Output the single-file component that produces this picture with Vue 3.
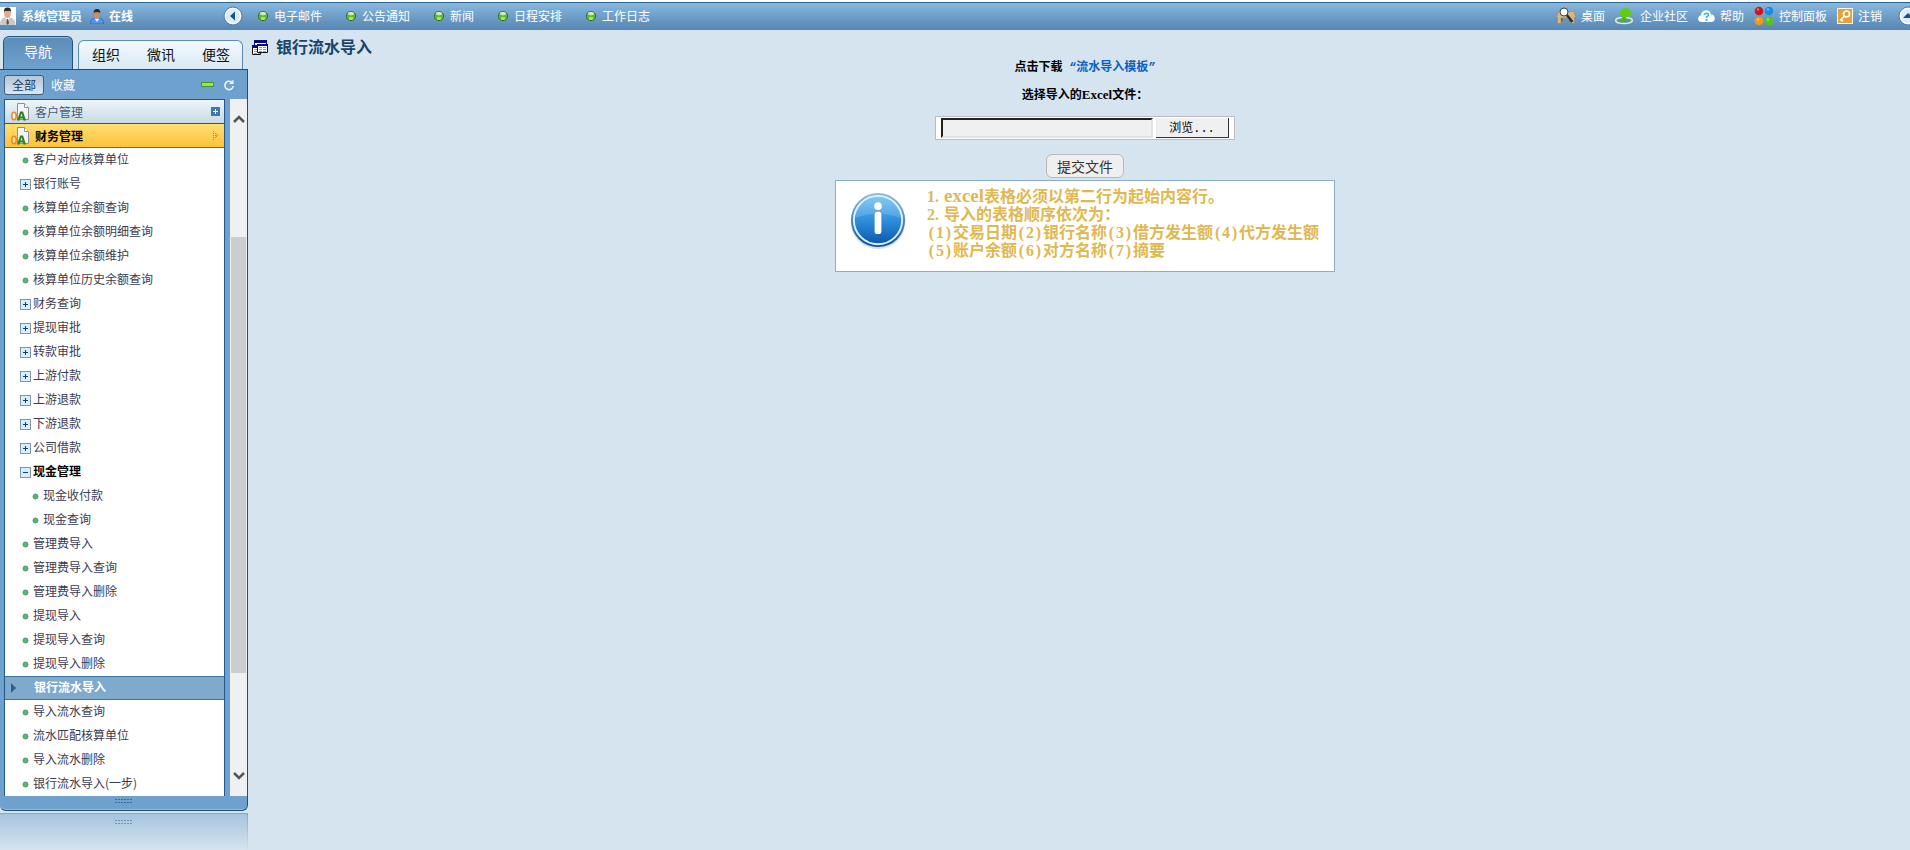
<script setup>
import { ref } from 'vue'

const shortcuts = ['电子邮件', '公告通知', '新闻', '日程安排', '工作日志']
const tabs = ['组织', '微讯', '便签']
const menu = [
  { t: '客户对应核算单位' },
  { t: '银行账号', k: 'plus' },
  { t: '核算单位余额查询' },
  { t: '核算单位余额明细查询' },
  { t: '核算单位余额维护' },
  { t: '核算单位历史余额查询' },
  { t: '财务查询', k: 'plus' },
  { t: '提现审批', k: 'plus' },
  { t: '转款审批', k: 'plus' },
  { t: '上游付款', k: 'plus' },
  { t: '上游退款', k: 'plus' },
  { t: '下游退款', k: 'plus' },
  { t: '公司借款', k: 'plus' },
  { t: '现金管理', k: 'minus' },
  { t: '现金收付款', nested: true },
  { t: '现金查询', nested: true },
  { t: '管理费导入' },
  { t: '管理费导入查询' },
  { t: '管理费导入删除' },
  { t: '提现导入' },
  { t: '提现导入查询' },
  { t: '提现导入删除' },
  { t: '银行流水导入', k: 'active' },
  { t: '导入流水查询' },
  { t: '流水匹配核算单位' },
  { t: '导入流水删除' },
  { t: '银行流水导入(一步)' }
]
const notes = [
  '1.excel表格必须以第二行为起始内容行。',
  '2.导入的表格顺序依次为：',
  '(1)交易日期(2)银行名称(3)借方发生额(4)代方发生额',
  '(5)账户余额(6)对方名称(7)摘要'
].map((line) => line.split(/([().]|excel)/).filter(Boolean))
const kindOf = (s) => (s === 'excel' ? 'word' : s === '.' ? 'half dot' : /^[()]$/.test(s) ? 'half' : '')
const fileName = ref('')
</script>

<template>
  <div class="page">
    <header class="topbar">
      <div class="user">
        <svg class="avatar" width="16" height="18" viewBox="0 0 16 18">
          <rect width="16" height="18" fill="#fff" />
          <path d="M0 18 Q0 11 5 10.500 L10 10.500 Q15.500 11 15.500 18Z" fill="#c9c9c9" />
          <path d="M5 10.500 L7.500 14 L10 10.500 L8.500 9.500H6.500Z" fill="#fff" />
          <path d="M7 12 L8 12 L9 16 L7.700 18 L6.400 16Z" fill="#555" />
          <ellipse cx="7.500" cy="6.500" rx="3.300" ry="4.500" fill="#e2ad83" />
          <path d="M4 6 Q3.300 0.500 7.500 0.600 Q11.700 0.500 11 6 L10.300 3.800 Q7.500 4 4.800 3.800Z" fill="#332821" />
        </svg>
        <strong>系统管理员</strong>
        <svg class="status" width="14" height="15" viewBox="0 0 14 15">
          <path d="M0.500 15 Q0 10 4 9.500 H10 Q14 10 13.500 15Z" fill="#5591ee" stroke="#2c61bd" stroke-width="0.700" />
          <path d="M4.500 9.500 L7 13 L9.500 9.500Z" fill="#eef5ff" />
          <ellipse cx="7" cy="5.500" rx="3" ry="4.200" fill="#c58f6a" />
          <path d="M3.800 5 Q3 0 7 0 Q11 0 10.200 5 L9.500 3.200 H4.500Z" fill="#2e2a2b" />
        </svg>
        <strong>在线</strong>
      </div>
      <button class="round" aria-label="收起左侧">
        <svg width="20" height="20" viewBox="0 0 20 20">
          <circle cx="10" cy="10" r="9" fill="#dcebf7" stroke="#4f7fa9" stroke-width="1" />
          <circle cx="10" cy="10" r="7.500" fill="none" stroke="#fff" />
          <path d="M12 5.500 V14.500 L7 10Z" fill="#1c5280" />
        </svg>
      </button>
      <nav class="shortcuts">
        <a v-for="s in shortcuts" :key="s" href="#">
          <svg width="10" height="12" viewBox="0 0 10 12">
            <circle cx="5" cy="6" r="4.600" fill="#5fbe25" stroke="#2c6b24" />
            <ellipse cx="5" cy="3.500" rx="3" ry="1.700" fill="#d3e9cc" />
            <ellipse cx="5" cy="8.500" rx="2.500" ry="1.500" fill="#a5ec58" />
          </svg>{{ s }}
        </a>
      </nav>
      <nav class="tools">
        <a href="#">
          <svg width="20" height="18" viewBox="0 0 20 18">
            <path d="M2 6 Q1 4.500 3 4.500 H17 Q19 4.500 18.500 6 L20 10.500 H18.500 V16.500 H15 V11 H5 V16.500 H1.500 V10.500 H0Z" fill="#d8b587" stroke="#a07f52" stroke-width="0.600" />
            <path d="M5 11 H7 V14.500 H5Z M13 11 H15 V14.500 H13Z" fill="#8a6a40" />
            <path d="M10 7 L16.500 15" stroke="#2e2e2e" stroke-width="2.400" />
            <circle cx="8" cy="5" r="4" fill="#f8fafc" stroke="#444" stroke-width="1" />
          </svg>桌面
        </a>
        <a href="#">
          <svg width="20" height="18" viewBox="0 0 20 18">
            <ellipse cx="9" cy="13.500" rx="8.300" ry="3" fill="#5f9a86" stroke="#d5ece2" stroke-width="1.500" />
            <path d="M7 8 H12 Q10 10.500 11.500 13 Q8.500 14.500 5.500 13 Q8 11 7 8Z" fill="#54b31c" />
            <ellipse cx="10.500" cy="5.800" rx="6" ry="4.500" fill="#62cc14" />
          </svg>企业社区
        </a>
        <a href="#">
          <svg width="17" height="16" viewBox="0 0 17 16">
            <path d="M4 14 Q0 14 0.200 10.500 Q0.500 7.500 3 7.300 Q3 2.500 8 2.200 Q12 2 13 6.500 Q16.500 6.500 16.800 10.300 Q16.700 14 13.500 14Z" fill="#fff" />
            <path d="M6.300 7 Q6.500 5.200 8.500 5.200 Q10.700 5.400 10.500 7 Q10.300 8.300 8.600 9 V10" fill="none" stroke="#23b8df" stroke-width="1.600" />
            <rect x="7.700" y="11" width="1.800" height="1.800" fill="#23b8df" />
          </svg>帮助
        </a>
        <a href="#">
          <svg width="20" height="20" viewBox="0 0 20 20">
            <circle cx="5" cy="5" r="4.300" fill="#d3131b" /><circle cx="15" cy="5" r="4.300" fill="#168ee5" />
            <circle cx="5" cy="15" r="4.300" fill="#f39a13" /><circle cx="15" cy="15" r="4.300" fill="#58c415" />
            <g fill="#fff" opacity="0.400"><circle cx="4" cy="3.500" r="1.200" /><circle cx="14" cy="3.500" r="1.200" /><circle cx="4" cy="13.500" r="1.200" /><circle cx="14" cy="13.500" r="1.200" /></g>
          </svg>控制面板
        </a>
        <a href="#">
          <svg width="16" height="16" viewBox="0 0 16 16">
            <rect x="0.500" y="0.500" width="15" height="15" fill="#e2a33a" stroke="#fdf6e4" />
            <circle cx="9.500" cy="6" r="3" fill="none" stroke="#fff" stroke-width="1.700" />
            <path d="M7.500 8 L3 12.500 M4 11.500 L5.800 13.300" stroke="#fff" stroke-width="1.700" />
          </svg>注销
        </a>
        <button class="round" aria-label="收起顶部">
          <svg width="12" height="20" viewBox="0 0 12 20">
            <circle cx="10" cy="10" r="9" fill="#dcebf7" stroke="#4f7fa9" stroke-width="1" />
            <circle cx="10" cy="10" r="7.500" fill="none" stroke="#fff" />
            <path d="M5 12 H15 L10 7Z" fill="#1c5280" />
          </svg>
        </button>
      </nav>
    </header>

    <div class="body">
      <aside class="side">
        <div class="tabs">
          <button class="tab-on">导航</button>
          <div class="tab-group"><button v-for="t in tabs" :key="t">{{ t }}</button></div>
        </div>
        <div class="panel">
          <div class="bar">
            <button class="all">全部</button>
            <button class="fav">收藏</button>
            <button class="collapse" aria-label="折叠"><i></i></button>
            <button class="reload" aria-label="刷新">
              <svg width="12" height="12" viewBox="0 0 12 12">
                <path d="M8.500 3 A4.200 4.200 0 1 0 10.200 7" fill="none" stroke="#eef6fd" stroke-width="1.600" />
                <path d="M6 5 H10.500 V0.500Z" fill="#eef6fd" />
              </svg>
            </button>
          </div>
          <div class="scroller">
            <div class="list">
              <a class="group" href="#">
                <svg class="oa" width="18" height="18" viewBox="0 0 18 18">
                  <path d="M6.500 0.500 H13.500 L17.500 4.500 V16.500 H6.500Z" fill="#f3f5f6" stroke="#8a9298" />
                  <path d="M13.500 0.500 V4.500 H17.500" fill="#fff" stroke="#8a9298" />
                  <ellipse cx="3" cy="13" rx="2.200" ry="3.800" fill="#fff" stroke="#ee8a18" stroke-width="1.600" />
                  <path d="M6 17.500 L9.200 8.500 H12 L15 17.500 H12.500 L12 15.500 H9 L8.500 17.500Z M9.500 13.500 H11.500 L10.600 10.500Z" fill="#2b8023" fill-rule="evenodd" />
                </svg>
                客户管理
                <svg class="end" width="9" height="9" viewBox="0 0 9 9"><rect width="9" height="9" fill="#3f78aa" /><path d="M4.500 2 V7 M2 4.500 H7" stroke="#fff" /></svg>
              </a>
              <a class="group open" href="#">
                <svg class="oa" width="18" height="18" viewBox="0 0 18 18">
                  <path d="M6.500 0.500 H13.500 L17.500 4.500 V16.500 H6.500Z" fill="#f3f5f6" stroke="#8a9298" />
                  <path d="M13.500 0.500 V4.500 H17.500" fill="#fff" stroke="#8a9298" />
                  <ellipse cx="3" cy="13" rx="2.200" ry="3.800" fill="#ffe9a8" stroke="#ee8a18" stroke-width="1.600" />
                  <path d="M6 17.500 L9.200 8.500 H12 L15 17.500 H12.500 L12 15.500 H9 L8.500 17.500Z M9.500 13.500 H11.500 L10.600 10.500Z" fill="#2b8023" fill-rule="evenodd" />
                </svg>
                财务管理
                <svg class="end" width="7" height="9" viewBox="0 0 7 9"><path d="M0 0h1v1h-1z M0 2h1v1h-1z M0 4h1v1h-1z M0 6h1v1h-1z M0 8h1v1h-1z M2 2h1v1h-1z M2 4h1v1h-1z M2 6h1v1h-1z M4 4h1v1h-1z M3 3h1v1h-1z M3 5h1v1h-1z" fill="#c38d14" /></svg>
              </a>
              <a v-for="m in menu" :key="m.t" href="#" class="row" :class="[m.k, { nested: m.nested }]">
                <svg v-if="m.k === 'active'" class="arrow" width="5" height="10" viewBox="0 0 5 10"><path d="M0 0 L5 5 L0 10Z" fill="#2c608d" /></svg>
                <svg v-else-if="m.k" class="mark" width="11" height="11" viewBox="0 0 11 11">
                  <rect x="0.500" y="0.500" width="10" height="10" fill="#d8effd" stroke="#8095aa" />
                  <path :d="m.k === 'plus' ? 'M3 5.500 H8 M5.500 3 V8' : 'M3 5.500 H8'" stroke="#123c86" />
                </svg>
                <svg v-else class="mark" width="11" height="11" viewBox="0 0 11 11">
                  <circle cx="5.500" cy="5.500" r="2.500" fill="#5cb95e" stroke="#4b967b" />
                </svg><span>{{ m.t }}</span>
              </a>
            </div>
            <div class="track">
              <svg width="12" height="10" viewBox="0 0 12 10"><path d="M1 8 L6 3 L11 8" fill="none" stroke="#555" stroke-width="2.500" /></svg>
              <div class="rail"><div class="thumb"></div></div>
              <svg width="12" height="10" viewBox="0 0 12 10"><path d="M1 2 L6 7 L11 2" fill="none" stroke="#555" stroke-width="2.500" /></svg>
            </div>
          </div>
          <div class="foot"><i class="grip"></i></div>
        </div>
        <div class="mirror"><i class="grip"></i></div>
      </aside>

      <main class="main">
        <h1>
          <svg width="16" height="16" viewBox="0 0 16 16">
            <path d="M2.500 1 H14.500 V9 H2.500Z" fill="#fff" stroke="#0a0a82" /><path d="M2 0 H15 V3 H2Z" fill="#0a0a82" />
            <path d="M0.500 6 H8.500 V14.500 H0.500Z" fill="#fff" stroke="#111" /><path d="M0 5 H6 V8 H0Z" fill="#0a0a82" />
            <path d="M5.500 4.500 H15.500 V12.500 H5.500Z" fill="#fff" stroke="#111" /><path d="M5 4 H16 V6 H5Z" fill="#0a0a82" />
            <path d="M7 7.500 H14 M7 9.500 H14 M7 11.500 H14 M2 9.500 H5 M2 11.500 H5 M2 13.500 H8" stroke="#999" stroke-dasharray="3 1" />
          </svg>银行流水导入
        </h1>
        <form class="form" @submit.prevent>
          <p>点击下载 <a href="#"><q>“</q>流水导入模板<q>”</q></a></p>
          <label for="file">选择导入的<span class="en">Excel</span>文件：</label>
          <div class="file">
            <input id="file" v-model="fileName" type="text" />
            <button type="button">浏览<span class="dots">...</span></button>
          </div>
          <button class="submit">提交文件</button>
          <section class="info">
            <svg width="58" height="60" viewBox="0 0 60 62">
              <defs>
                <linearGradient id="ball" x1="0" y1="0" x2="0" y2="1"><stop offset="0" stop-color="#6cc0f4" /><stop offset="0.500" stop-color="#2f8fdc" /><stop offset="1" stop-color="#0b58ad" /></linearGradient>
                <linearGradient id="rim" x1="0" y1="0" x2="0" y2="1"><stop offset="0" stop-color="#8dbfe0" /><stop offset="1" stop-color="#0a4d9c" /></linearGradient>
              </defs>
              <ellipse cx="30" cy="33" rx="28" ry="27" fill="#b9c0c8" opacity="0.500" />
              <circle cx="30" cy="30" r="28" fill="url(#rim)" />
              <circle cx="30" cy="30" r="25" fill="url(#ball)" stroke="#d9f0fd" stroke-width="2" />
              <path d="M6 28 A24 24 0 0 1 54 28 Q30 19 6 28Z" fill="#fff" opacity="0.150" />
              <circle cx="30" cy="15.500" r="4" fill="#fff" />
              <rect x="26.500" y="21.500" width="7" height="23" rx="3" fill="#fff" />
            </svg>
            <div class="notes">
              <div v-for="(line, i) in notes" :key="i"><span v-for="(s, j) in line" :key="j" :class="kindOf(s)">{{ s }}</span></div>
            </div>
          </section>
        </form>
      </main>
    </div>
  </div>
</template>

<style>
body { background: #d6e4ef; }
</style>

<style scoped>
* { box-sizing: border-box; }
.page { min-height: 100vh; display: flex; flex-direction: column; font: 12px/16px "Noto Sans CJK SC", sans-serif; color: #3b3b4f; overflow: hidden; }
button { margin: 0; padding: 0; border: 0; background: none; font: inherit; color: inherit; cursor: pointer; }
a { color: inherit; text-decoration: none; }
svg { display: block; flex: none; }

.topbar { height: 30px; border-top: 2px solid #fff; background: linear-gradient(#8abae0, #5585b1); box-shadow: inset 0 1px #2b6594; display: flex; align-items: center; color: #fff; white-space: nowrap; }
.user { width: 223px; display: flex; align-items: center; }
.avatar { margin-right: 6px; }
.status { margin: 0 5px 0 8px; }
.shortcuts { display: flex; gap: 24px; margin-left: 15px; }
.shortcuts a { display: flex; align-items: center; gap: 6px; }
.tools { display: flex; align-items: center; gap: 10px; margin-left: auto; }
.tools a { display: flex; align-items: center; gap: 5px; }
.tools .round { margin-left: 6px; }

.body { flex: 1; display: flex; }
.side { width: 248px; display: flex; flex-direction: column; }
.tabs { display: flex; align-items: flex-end; padding: 6px 5px 0 3px; font-size: 14px; }
.tab-on { width: 70px; height: 33px; border: 1px solid #1f5480; border-bottom: 0; border-radius: 6px 6px 0 0; background: linear-gradient(#5c8cb9, #6fa1cf); box-shadow: inset 0 1px #8fbce0; color: #fff; padding-bottom: 4px; }
.tab-group { flex: 1; height: 29px; margin-left: 5px; border: 1px solid #5b8cb6; border-bottom: 0; border-radius: 6px 6px 0 0; background: linear-gradient(#f3f9fd, #d9eaf5); display: flex; justify-content: space-between; padding: 0 12px 2px 13px; color: #111; }
.panel { background: #6fa1cf; border: solid #1f4f78; border-width: 1px 1px 1px 0; border-radius: 0 0 6px 6px; box-shadow: inset 0 -1px #8fbce0; }
.bar { height: 29px; display: flex; align-items: center; padding: 0 12px 0 4px; color: #fff; }
.all { width: 40px; height: 20px; border: 1px solid #44607d; border-radius: 3px; background: linear-gradient(#b4c6d9, #dbe6f2); color: #123b60; }
.fav { margin-left: 7px; }
.collapse { margin-left: auto; padding: 5px 0; }
.collapse i { display: block; width: 13px; height: 5px; border: 1px solid #3f9a1f; background: #9be35c; }
.reload { margin-left: 9px; }
.scroller { display: flex; gap: 5px; padding-left: 4px; }
.list { flex: 1; border: 1px solid #215a89; border-bottom: 0; background: #fff; }
.group { display: flex; align-items: center; height: 24px; padding: 0 4px 0 6px; border-bottom: 1px solid #215a89; background: linear-gradient(#eef5f8, #c8dbe6); color: #4a5b74; }
.oa { margin-right: 6px; }
.end { margin-left: auto; }
.open { border-bottom-color: #7d6a20; background: linear-gradient(#ffe073, #ffc13a); color: #000; font-weight: bold; }
.row { display: flex; align-items: center; height: 24px; padding-left: 15px; white-space: nowrap; }
.row span { padding-bottom: 2px; }
.nested { padding-left: 25px; }
.mark { margin-right: 2px; }
.minus { color: #000; font-weight: bold; }
.active { padding-left: 6px; border: solid #3b74a2; border-width: 1px 0; background: #80aacb; color: #fff; font-weight: bold; }
.arrow { margin-right: 18px; }
.track { width: 17px; background: #f0f0f0; display: flex; flex-direction: column; align-items: center; padding: 15px 0; }
.rail { flex: 1; align-self: stretch; padding: 113px 1px 0; }
.thumb { height: 436px; background: #cdcdcd; }
.foot { height: 14px; display: flex; justify-content: center; padding-top: 3px; }
.grip { width: 17px; height: 4px; background: repeating-linear-gradient(90deg, #2c608d 0 2px, transparent 2px 3px); opacity: 0.8; mask: linear-gradient(#000 0 1px, transparent 1px 3px, #000 3px 4px); }
.mirror { flex: 1; min-height: 37px; margin-top: 2px; border: solid #8aa5bb; border-width: 1px 1px 0 0; border-image: linear-gradient(#8aa5bb, #d6e4ef) 1; background: linear-gradient(#a5c4de, #d6e4ef); display: flex; justify-content: center; padding-top: 6px; }
.mirror .grip { opacity: 0.5; }

.main { flex: 1; padding-left: 4px; }
h1 { margin: 6px 0 0; height: 20px; display: flex; align-items: center; gap: 8px; font-size: 16px; line-height: 20px; color: #1b4468; }
h1 svg { margin-top: 4px; }
.form { display: flex; flex-direction: column; align-items: center; padding-left: 8px; font-weight: bold; color: #000; }
p { margin: 2px 0 10px; }
p a { color: #0a5fc0; margin-left: 4px; }
q { quotes: none; font-family: "Liberation Mono", monospace; }
.en { font: bold 13px/16px "Liberation Serif", serif; }
.file { margin-top: 13px; width: 300px; height: 24px; border: 1px solid #b9bdc0; background: #fff; display: flex; align-items: center; padding: 0 5px; gap: 3px; }
.file input { flex: 1; min-width: 0; height: 20px; margin: 0; padding: 0 4px; border: 2px solid; border-color: #222 #e3e3e3 #e3e3e3 #222; background: #f0f0f0; font: inherit; outline: 0; }
.file button { width: 73px; height: 20px; border: solid #333; border-width: 0 1px 1px 0; background: #f0f0f0; font-weight: normal; }
.dots { font-family: "Liberation Mono", monospace; }
.submit { margin-top: 14px; width: 78px; height: 24px; border: 1px solid #b9b9b9; border-radius: 6px; background: #efefef; color: #333; font-size: 14px; font-weight: normal; }
.info { margin-top: 2px; width: 500px; height: 92px; border: 1px solid #8badca; background: #fff; display: flex; padding: 7px 0 0 13px; gap: 20px; }
.notes { font-size: 16px; line-height: 18px; color: #e0b851; white-space: nowrap; font-family: "Liberation Serif", "Noto Sans CJK SC", serif; }
.info > svg { margin-top: 3px; }
.half { display: inline-block; width: 9px; text-align: center; }
.dot { text-align: left; }
.word { font-size: 19px; line-height: 16px; }
</style>
